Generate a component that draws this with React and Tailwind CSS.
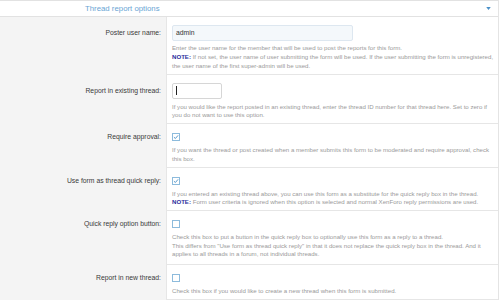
import React from "react";

const rows = [
  {
    label: "Poster user name:",
    control: "name",
    lines: [
      "Enter the user name for the member that will be used to post the reports for this form.",
      ["NOTE:", " If not set, the user name of user submitting the form will be used. If the user submitting the form is unregistered,"],
      "the user name of the first super-admin will be used.",
    ],
  },
  {
    label: "Report in existing thread:",
    control: "id",
    lines: [
      "If you would like the report posted in an existing thread, enter the thread ID number for that thread here. Set to zero if",
      "you do not want to use this option.",
    ],
  },
  {
    label: "Require approval:",
    control: "checked",
    lines: [
      "If you want the thread or post created when a member submits this form to be moderated and require approval, check",
      "this box.",
    ],
  },
  {
    label: "Use form as thread quick reply:",
    control: "checked",
    lines: [
      "If you entered an existing thread above, you can use this form as a substitute for the quick reply box in the thread.",
      ["NOTE:", " Form user criteria is ignored when this option is selected and normal XenForo reply permissions are used."],
    ],
  },
  {
    label: "Quick reply option button:",
    control: "box",
    lines: [
      "Check this box to put a button in the quick reply box to optionally use this form as a reply to a thread.",
      "This differs from \"Use form as thread quick reply\" in that it does not replace the quick reply box in the thread. And it",
      "applies to all threads in a forum, not individual threads.",
    ],
  },
  {
    label: "Report in new thread:",
    control: "box",
    lines: ["Check this box if you would like to create a new thread when this form is submitted."],
  },
];

function Checkbox({ checked }) {
  return (
    <span className="flex h-[8px] w-[8px] items-center justify-center border border-[#8dbbdc] bg-white">
      {checked && (
        <svg viewBox="0 0 8 8" className="h-[6px] w-[6px]">
          <path d="M1.2 4.2 L3.2 6 L6.8 1.8" fill="none" stroke="#4a8fc6" strokeWidth="1.2" />
        </svg>
      )}
    </span>
  );
}

function Control({ type }) {
  if (type === "name") {
    return (
      <div className="flex h-[16px] w-[181px] items-center rounded-[2px] border border-[#dde7f0] bg-[#f4f8fb] pl-[3px] text-[6.8px] text-[#333]">
        admin
      </div>
    );
  }
  if (type === "id") {
    return (
      <div className="flex h-[16px] w-[50px] items-center rounded-[2px] border border-[#d6d6d6] bg-white pl-[3px]">
        <span className="h-[9px] w-px bg-[#222]" />
      </div>
    );
  }
  return (
    <div className="flex h-[10px] items-center">
      <Checkbox checked={type === "checked"} />
    </div>
  );
}

export default function App() {
  return (
    <div className="h-[300px] w-[502px] overflow-hidden bg-white font-['Liberation_Sans',Arial,sans-serif]">
      <div className="w-[499px] border-r border-[#e4e4e4]">
        {/* header */}
        <div className="flex h-[17px] items-center justify-between border-y border-[#e2e2e2] bg-white pl-[85px] pr-[7px]">
          <span className="text-[7.8px] text-[#6aa5d4]">Thread report options</span>
          <svg viewBox="0 0 6 4" className="h-[3px] w-[5px]">
            <path d="M0 0 H6 L3 4 Z" fill="#4a90c8" />
          </svg>
        </div>

        {rows.map((r, i) => {
          const isInput = r.control === "name" || r.control === "id";
          return (
            <div key={i} className="flex">
              <div className="w-[166px] shrink-0 bg-[#f4f4f4] pr-[5px] pt-[8px] text-right">
                <div className={`${isInput ? "leading-[16px]" : "leading-[10px]"} text-[6.8px] text-[#3a3a3a]`}>
                  {r.label}
                </div>
              </div>
              <div
                className={`${i === 4 ? "pb-[5.5px]" : "pb-[3.5px]"} flex-1 border-b border-l border-[#e6e6e6] bg-white px-[5px] pt-[8px]`}
              >
                <Control type={r.control} />
                <div
                  className={`${i === 0 ? "mt-[2px] leading-[9px]" : "mt-[4px] leading-[8.5px]"} whitespace-nowrap text-[6.1px] text-[#9a9a9a]`}
                >
                  {r.lines.map((l, j) =>
                    Array.isArray(l) ? (
                      <div key={j}>
                        <b className="text-[#2c2c9c]">{l[0]}</b>
                        {l[1]}
                      </div>
                    ) : (
                      <div key={j}>{l}</div>
                    )
                  )}
                </div>
              </div>
            </div>
          );
        })}
      </div>
    </div>
  );
}
